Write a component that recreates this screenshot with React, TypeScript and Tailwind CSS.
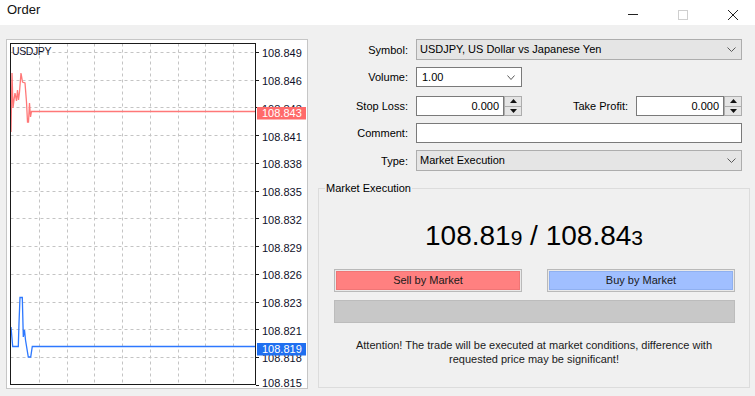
import React from "react";

const OX = 7;
const OY = 40;

function pts(list: number[][]) {
  return list.map(([x, y]) => `${(x - OX).toFixed(1)},${(y - OY).toFixed(1)}`).join(" ");
}

function Chart() {
  const hy = Array.from({ length: 12 }, (_, k) => Math.round(52 + 27.73 * k) - OY + 0.5);
  const vx = Array.from({ length: 8 }, (_, k) => Math.round(39 + 27.73 * k) - OX + 0.5);
  const labels = [
    "108.849",
    "108.846",
    "108.843",
    "108.841",
    "108.838",
    "108.835",
    "108.832",
    "108.829",
    "108.826",
    "108.823",
    "108.821",
    "108.818",
    "108.815",
  ];
  const ly = labels.map((_, k) => (k === 12 ? 381.8 : 52 + 27.73 * k) - OY);
  const red = [
    [11, 132], [12, 73], [13, 108], [14, 100], [15, 93], [16.5, 101], [17.5, 90], [18.5, 100],
    [19.5, 92], [21, 73], [22.5, 82], [25, 83], [26.5, 102], [27.5, 122], [28.5, 122],
    [29.5, 103], [30.5, 117], [31.5, 111.5], [255, 111.5],
  ];
  const blue = [
    [11, 327], [12.7, 346.5], [18.3, 346.5], [19, 323], [20, 297.5], [22.3, 297.5], [23.3, 337],
    [24.5, 330], [25.5, 340], [28.3, 357], [30.7, 357], [32.3, 346.5], [255, 346.5],
  ];
  const font = '"Liberation Sans", Arial, sans-serif';
  return (
    <svg width="300" height="348" viewBox="0 0 300 348" className="block">
      <rect x="0" y="0" width="300" height="348" fill="#ffffff" />
      {hy.map((y, i) => (
        <line key={"h" + i} x1="3.5" x2="248.5" y1={y} y2={y} stroke="#c4c4c4" strokeDasharray="3 3" />
      ))}
      {vx.map((x, i) => (
        <line key={"v" + i} x1={x} x2={x} y1="3.5" y2="344.5" stroke="#c4c4c4" strokeDasharray="3 3" />
      ))}
      <polyline points={pts(red)} fill="none" stroke="#ff7878" strokeWidth="1.3" />
      <polyline points={pts(blue)} fill="none" stroke="#2d78ff" strokeWidth="1.3" />
      <rect x="3.5" y="3.5" width="245" height="341" fill="none" stroke="#1a1a1a" />
      {labels.map((t, k) => (
        <g key={"l" + k}>
          <line
            x1="249"
            x2="252"
            y1={Math.round(52 + 27.73 * k - OY) + 0.5}
            y2={Math.round(52 + 27.73 * k - OY) + 0.5}
            stroke="#1a1a1a"
          />
          <text x="255" y={ly[k] + 5.4} fontFamily={font} fontSize="11" fill="#10102a">
            {t}
          </text>
        </g>
      ))}
      <text x="5" y="15" fontFamily={font} fontSize="10.5" letterSpacing="-0.4" fill="#10102a">
        USDJPY
      </text>
      <rect x="250" y="67" width="49" height="12.5" fill="#ff6a6a" />
      <text x="255" y="77.2" fontFamily={font} fontSize="11" fill="#ffffff">
        108.843
      </text>
      <rect x="250" y="303" width="49" height="12.5" fill="#1f6ff0" />
      <text x="255" y="313.2" fontFamily={font} fontSize="11" fill="#ffffff">
        108.819
      </text>
    </svg>
  );
}

function Chevron({ w = 9 }: { w?: number }) {
  return (
    <svg width={w} height="5" viewBox={`0 0 ${w} 5`} className="block">
      <path d={`M0.5 0.5 L${w / 2} 4.5 L${w - 0.5} 0.5`} fill="none" stroke="#5a5a5a" strokeWidth="1" />
    </svg>
  );
}

function Spin() {
  return (
    <div className="w-[18px] h-[20px] flex flex-col border border-[#adadad] bg-[#e5e5e5] shrink-0">
      <div className="flex-1 flex items-center justify-center border-b border-[#adadad]">
        <svg width="7" height="4" viewBox="0 0 7 4" className="block">
          <path d="M3.5 0 L7 4 L0 4Z" fill="#111" />
        </svg>
      </div>
      <div className="flex-1 flex items-center justify-center">
        <svg width="7" height="4" viewBox="0 0 7 4" className="block">
          <path d="M0 0 L7 0 L3.5 4Z" fill="#111" />
        </svg>
      </div>
    </div>
  );
}

function Label({ children, w = "w-[98px]" }: { children: React.ReactNode; w?: string }) {
  return (
    <div className={`${w} shrink-0 pr-[8px] text-right text-[11px] leading-[14px] text-black`}>{children}</div>
  );
}

export default function App() {
  return (
    <div
      className="w-[755px] h-[396px] bg-[#f0f0f0] overflow-hidden flex flex-col text-black"
      style={{ fontFamily: '"Liberation Sans", Arial, sans-serif' }}
    >
      {/* title bar */}
      <div className="h-[25px] bg-white flex items-start shrink-0">
        <div className="pl-[7px] h-[20px] flex items-center text-[13px] text-[#111]">Order</div>
        <div className="ml-auto mr-[-3px] flex pt-[4px]">
          <div className="w-[50px] h-[21px] flex items-center justify-center">
            <div className="w-[10px] h-[1px] bg-[#222]" />
          </div>
          <div className="w-[50px] h-[21px] flex items-center justify-center">
            <div className="w-[10px] h-[10px] border border-[#cfcfcf]" />
          </div>
          <div className="w-[50px] h-[21px] flex items-center justify-center">
            <svg width="10" height="10" viewBox="0 0 10 10" className="block">
              <path d="M0 0 L10 10 M10 0 L0 10" stroke="#222" strokeWidth="1" />
            </svg>
          </div>
        </div>
      </div>

      {/* body */}
      <div className="flex pt-[14px]">
        <div className="ml-[6px] w-[302px] h-[350px] border border-[#c6c6c6] bg-white shrink-0">
          <Chart />
        </div>

        <div className="w-[447px] pl-[10px] pr-[5px] flex flex-col">
          {/* Symbol */}
          <div className="flex items-center h-[21px]">
            <Label>Symbol:</Label>
            <div className="w-[326px] h-[21px] border border-[#adadad] bg-[#e5e5e5] flex items-center pl-[3px] pr-[5px] text-[11px]">
              <span className="flex-1">USDJPY, US Dollar vs Japanese Yen</span>
              <Chevron />
            </div>
          </div>
          {/* Volume */}
          <div className="flex items-center h-[20px] mt-[7px]">
            <Label>Volume:</Label>
            <div className="w-[106px] h-[20px] border border-[#7a7a7a] bg-white flex items-center pl-[5px] pr-[6px] text-[11px]">
              <span className="flex-1">1.00</span>
              <Chevron w={8} />
            </div>
          </div>
          {/* Stop loss / take profit */}
          <div className="flex items-center h-[20px] mt-[9px]">
            <Label>Stop Loss:</Label>
            <div className="w-[88px] h-[20px] shrink-0 border border-[#7a7a7a] bg-white flex items-center justify-end pr-[4px] text-[11px]">
              0.000
            </div>
            <Spin />
            <Label w="w-[114px]">Take Profit:</Label>
            <div className="w-[88px] h-[20px] shrink-0 border border-[#7a7a7a] bg-white flex items-center justify-end pr-[4px] text-[11px]">
              0.000
            </div>
            <Spin />
          </div>
          {/* Comment */}
          <div className="flex items-center h-[20px] mt-[7px]">
            <Label>Comment:</Label>
            <div className="w-[326px] h-[20px] border border-[#7a7a7a] bg-white" />
          </div>
          {/* Type */}
          <div className="flex items-center h-[21px] mt-[7px]">
            <Label>Type:</Label>
            <div className="w-[326px] h-[21px] border border-[#adadad] bg-[#e5e5e5] flex items-center pl-[3px] pr-[5px] text-[11px]">
              <span className="flex-1">Market Execution</span>
              <Chevron />
            </div>
          </div>

          {/* Group box */}
          <div className="relative mt-[17px] w-[432px] h-[200px] border border-[#dcdcdc] flex flex-col">
            <div className="absolute left-[6px] -top-[8px] px-[1px] bg-[#f0f0f0] text-[11px] leading-[14px]">
              Market Execution
            </div>
            <div className="mt-[31px] h-[32px] leading-[32px] text-center text-black whitespace-nowrap">
              <span className="text-[28px]">108.81</span>
              <span className="text-[21px]">9</span>
              <span className="text-[28px]"> / 108.84</span>
              <span className="text-[21px]">3</span>
            </div>
            <div className="mt-[17px] ml-[15px] flex gap-[25px]">
              <div className="w-[188px] h-[23px] border border-[#b9b9b9] p-[1px] bg-[#e9e9e9]">
                <div className="w-full h-full bg-[#ff8080] border border-[#f07575] flex items-center justify-center text-[11px] text-[#1a1a1a]">
                  Sell by Market
                </div>
              </div>
              <div className="w-[188px] h-[23px] border border-[#b9b9b9] p-[1px] bg-[#e9e9e9]">
                <div className="w-full h-full bg-[#a0bfff] border border-[#8fb0f0] flex items-center justify-center text-[11px] text-[#1a1a1a]">
                  Buy by Market
                </div>
              </div>
            </div>
            <div className="mt-[8px] ml-[15px] w-[401px] h-[23px] bg-[#c8c8c8] border border-[#bcbcbc]" />
            <div className="mt-[15px] text-center text-[11px] leading-[14px] text-[#1a1a1a]">
              Attention! The trade will be executed at market conditions, difference with
              <br />
              requested price may be significant!
            </div>
          </div>
        </div>
      </div>
    </div>
  );
}
